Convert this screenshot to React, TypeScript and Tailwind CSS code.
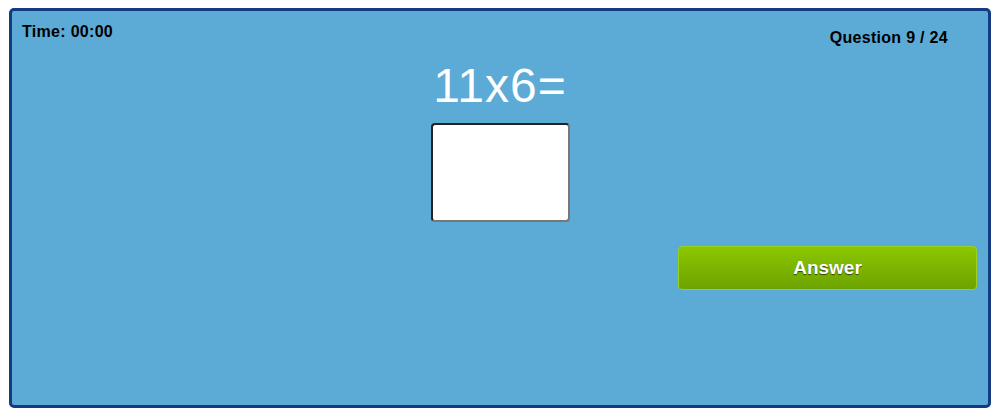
export default function App() {
  return (
    <div className="w-[999px] h-[420px] bg-white pt-[8px] pl-[9px] font-['Liberation_Sans',Arial,sans-serif]">
      <div className="w-[982px] h-[400px] rounded-[5px] border-[3px] border-[#123b82] bg-[#5caad6] flex flex-col">
        {/* Header */}
        <div className="flex items-start justify-between pl-[10px] pr-[40px] pt-[13px]">
          <div className="text-[16px] leading-[16px] font-bold tracking-[0.3px] text-black">Time: 00:00</div>
          <div className="mt-[6px] text-[16px] leading-[16px] font-bold tracking-[0.3px] text-black">Question 9 / 24</div>
        </div>

        {/* Question */}
        <div className="flex flex-col items-center mt-[16px]">
          <div className="text-[48px] leading-[48px] tracking-[1px] text-white">11x6=</div>
          <input
            type="text"
            className="mt-[13px] w-[139px] h-[99px] rounded-[4px] bg-white border-2 border-t-[#222] border-l-[#222] border-b-[#777] border-r-[#777] outline-none"
          />
        </div>

        {/* Answer */}
        <div className="flex justify-end pr-[11px] mt-[24px]">
          <button className="w-[299px] h-[44px] rounded-[4px] border border-[#9ad11c] bg-gradient-to-b from-[#8bc700] to-[#6da300] text-white text-[19px] font-bold [text-shadow:0_1px_1px_rgba(0,0,0,0.6)]">
            Answer
          </button>
        </div>
      </div>
    </div>
  );
}
